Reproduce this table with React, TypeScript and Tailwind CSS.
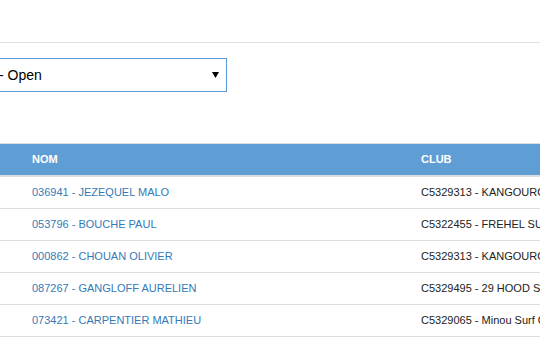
import React from 'react';

const riders = [
  { nom: '036941 - JEZEQUEL MALO', club: 'C5329313 - KANGOUROU SURF CLUB' },
  { nom: '053796 - BOUCHE PAUL', club: 'C5322455 - FREHEL SURF CLUB' },
  { nom: '000862 - CHOUAN OLIVIER', club: 'C5329313 - KANGOUROU SURF CLUB' },
  { nom: '087267 - GANGLOFF AURELIEN', club: 'C5329495 - 29 HOOD SURF CLUB' },
  { nom: '073421 - CARPENTIER MATHIEU', club: 'C5329065 - Minou Surf Club' },
];

export default function App() {
  return (
    <div className="w-[540px] h-[363px] overflow-hidden bg-white font-['Liberation_Sans',Arial,sans-serif]">
      <div className="h-[42px]" />
      <div className="border-t border-[#e0e0e0]" />

      {/* category select */}
      <div className="mt-[15px] -ml-[2px] w-[229px] h-[34px] border border-[#5b9bd5] flex items-center justify-between pr-[6px]">
        <span className="text-[14px] text-black leading-none">- Open</span>
        <svg width="7" height="6" viewBox="0 0 7 6" className="mr-[1px]">
          <path d="M0 0 H7 L3.5 6 Z" fill="#000" />
        </svg>
      </div>

      {/* riders table */}
      <div className="mt-[51px] w-[700px] text-[11px]">
        <div className="border-t border-[#dddddd] border-b-2 border-b-[#dddddd] bg-[#5f9ed5] h-[34px] grid grid-cols-[421px_1fr] items-center font-bold text-white">
          <div className="pl-[32px]">NOM</div>
          <div>CLUB</div>
        </div>
        {riders.map((r) => (
          <div
            key={r.nom}
            className="h-[32px] border-b border-[#dddddd] grid grid-cols-[421px_1fr] items-center whitespace-nowrap"
          >
            <div className="pl-[32px] text-[#337ab7]">{r.nom}</div>
            <div className="text-[#222]">{r.club}</div>
          </div>
        ))}
      </div>
    </div>
  );
}
